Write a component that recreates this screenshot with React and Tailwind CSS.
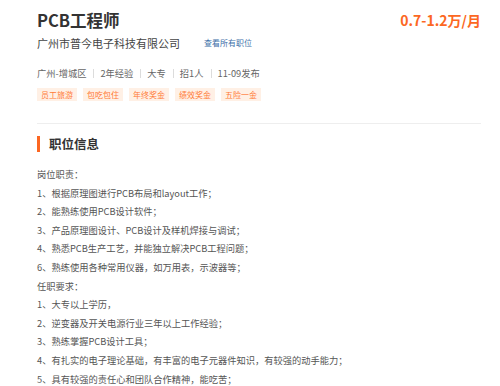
export default function App() {
  const meta = ["广州-增城区", "2年经验", "大专", "招1人", "11-09发布"];
  const tags = ["员工旅游", "包吃包住", "年终奖金", "绩效奖金", "五险一金"];
  const lines = [
    "岗位职责：",
    "1、根据原理图进行PCB布局和layout工作；",
    "2、能熟练使用PCB设计软件；",
    "3、产品原理图设计、PCB设计及样机焊接与调试；",
    "4、熟悉PCB生产工艺，并能独立解决PCB工程问题；",
    "6、熟练使用各种常用仪器，如万用表，示波器等；",
    "任职要求：",
    "1、大专以上学历，",
    "2、逆变器及开关电源行业三年以上工作经验；",
    "3、熟练掌握PCB设计工具；",
    "4、有扎实的电子理论基础，有丰富的电子元器件知识，有较强的动手能力；",
    "5、具有较强的责任心和团队合作精神，能吃苦；",
  ];
  return (
    <div
      className="w-[500px] h-[386px] overflow-hidden bg-white pl-[37px] pr-[19px]"
      style={{ fontFamily: '"Noto Sans CJK SC", "Noto Sans", sans-serif' }}
    >
      <div className="flex justify-between items-center mt-[8px] h-[24px]">
        <div className="text-[16.5px] font-bold leading-[24px] text-[#333]">PCB工程师</div>
        <div className="text-[14px] font-bold leading-[24px] text-[#fc6722]">0.7-1.2万/月</div>
      </div>
      <div className="flex items-center mt-[1px] h-[20px]">
        <span className="text-[11px] leading-[20px] text-[#444]">广州市普今电子科技有限公司</span>
        <span className="ml-[24px] text-[8px] leading-[20px] text-[#3d6fa8]">查看所有职位</span>
      </div>
      <div className="flex items-center mt-[12px] h-[16px] text-[9.25px] leading-[16px] text-[#666]">
        {meta.map((m, i) => (
          <span key={i} className="flex items-center">
            {i > 0 && <span className="ml-[7px] mr-[6px] w-px h-[9px] bg-[#dcdcdc]" />}
            <span>{m}</span>
          </span>
        ))}
      </div>
      <div className="flex mt-[7px] gap-[6px]">
        {tags.map((t) => (
          <span
            key={t}
            className="h-[13px] px-[4px] text-[8px] leading-[13px] bg-[#fff0e5] text-[#ff7a36]"
          >
            {t}
          </span>
        ))}
      </div>
      <div className="mt-[22px] border-t border-[#eeeeee]" />
      <div className="flex items-center mt-[12px] h-[16px]">
        <span className="w-[3px] h-[16px] bg-[#fc6722]" />
        <span className="ml-[9px] text-[12.5px] font-bold leading-[16px] text-[#333]">职位信息</span>
      </div>
      <div className="mt-[13px] text-[9.25px] leading-[18.6px] text-[#555]">
        {lines.map((l, i) => (
          <div key={i} className="whitespace-nowrap">{l}</div>
        ))}
      </div>
    </div>
  );
}
